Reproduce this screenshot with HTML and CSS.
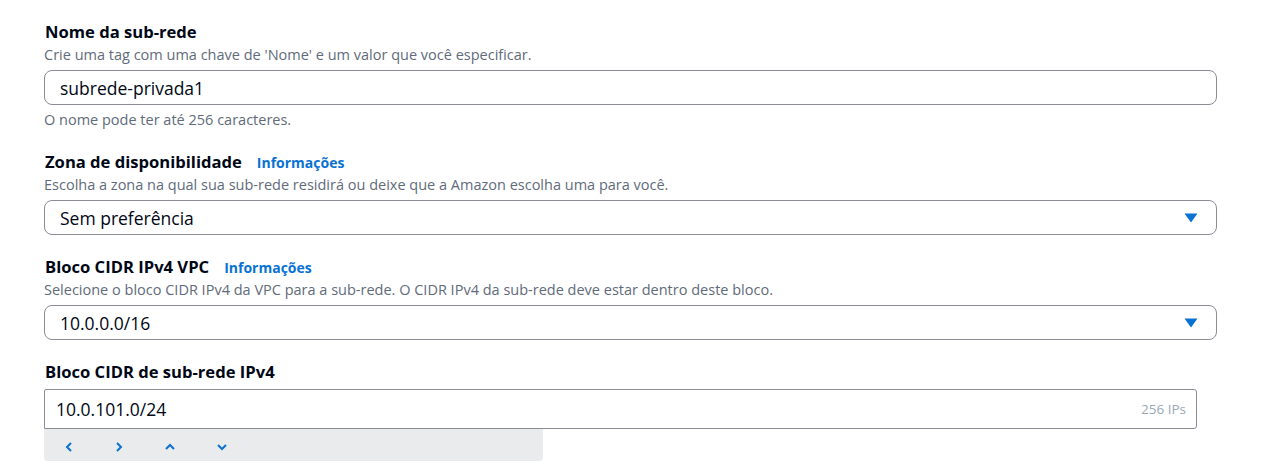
FILE: index.html
```html
<!DOCTYPE html>
<html lang="pt">
<head>
<meta charset="utf-8">
<link rel="stylesheet" href="styles.css">
</head>
<body>
<div class="form">
  <div class="field">
    <div class="label-row"><span class="label">Nome da sub-rede</span></div>
    <div class="desc">Crie uma tag com uma chave de 'Nome' e um valor que você especificar.</div>
    <div class="input round">subrede-privada1</div>
    <div class="hint">O nome pode ter até 256 caracteres.</div>
  </div>
  <div class="field">
    <div class="label-row"><span class="label">Zona de disponibilidade</span><span class="info">Informações</span></div>
    <div class="desc">Escolha a zona na qual sua sub-rede residirá ou deixe que a Amazon escolha uma para você.</div>
    <div class="input round select"><span>Sem preferência</span><svg class="caret" width="14" height="10" viewBox="0 0 14 10"><path d="M0.5 0.5h13L7 9.5z" fill="#0972d3"/></svg></div>
  </div>
  <div class="field">
    <div class="label-row"><span class="label">Bloco CIDR IPv4 VPC</span><span class="info">Informações</span></div>
    <div class="desc">Selecione o bloco CIDR IPv4 da VPC para a sub-rede. O CIDR IPv4 da sub-rede deve estar dentro deste bloco.</div>
    <div class="input round select"><span>10.0.0.0/16</span><svg class="caret" width="14" height="10" viewBox="0 0 14 10"><path d="M0.5 0.5h13L7 9.5z" fill="#0972d3"/></svg></div>
  </div>
  <div class="field last">
    <div class="label-row"><span class="label">Bloco CIDR de sub-rede IPv4</span></div>
    <div class="cidr">
      <span>10.0.101.0/24</span><span class="ips">256 IPs</span>
    </div>
    <div class="stepper">
      <svg width="10" height="12" viewBox="0 0 10 12"><path d="M7 2L3 6l4 4" fill="none" stroke="#0972d3" stroke-width="2"/></svg>
      <svg width="10" height="12" viewBox="0 0 10 12"><path d="M3 2l4 4-4 4" fill="none" stroke="#0972d3" stroke-width="2"/></svg>
      <svg width="12" height="10" viewBox="0 0 12 10"><path d="M2 7l4-4 4 4" fill="none" stroke="#0972d3" stroke-width="2"/></svg>
      <svg width="12" height="10" viewBox="0 0 12 10"><path d="M2 3l4 4 4-4" fill="none" stroke="#0972d3" stroke-width="2"/></svg>
    </div>
  </div>
</div>
</body>
</html>
```
FILE: styles.css
```css
html, body { margin: 0; padding: 0; background: #fff; }
body { font-family: "Open Sans", "Noto Sans", sans-serif; color: #000716; }
.form { padding: 21px 0 0 44px; width: 1173px; display: flex; flex-direction: column; gap: 21px; }
.label-row { display: flex; align-items: baseline; gap: 15px; padding-left: 1px; height: 22px; line-height: 22px; }
.label { font-size: 16.6px; font-weight: 700; }
.info { font-size: 14px; font-weight: 700; color: #0972d3; }
.desc { font-size: 14.5px; color: #5f6b7a; line-height: 20px; margin-top: 2px; margin-bottom: 5px; }
.input { box-sizing: border-box; height: 35px; border: 1px solid #8c8c94; padding: 0 15px; font-size: 17.5px; display: flex; align-items: center; }
.round { border-radius: 8px; }
.select { justify-content: space-between; padding-right: 18px; }
.hint { font-size: 14.5px; color: #5f6b7a; line-height: 20px; margin-top: 5px; }
.field.last .label-row { margin-bottom: 6px; }
.cidr { box-sizing: border-box; width: 1153px; height: 40px; border: 1px solid #8c8c94; border-radius: 2px 3px 3px 0; padding: 0 10px 0 11px; display: flex; align-items: center; justify-content: space-between; font-size: 17.5px; }
.ips { font-size: 13.5px; color: #9ba7b6; }
.stepper { width: 499px; height: 32px; background: #e9ebed; border-radius: 0 0 4px 4px; display: flex; align-items: center; gap: 40px; padding: 3px 0 0 20px; box-sizing: border-box; }
```
